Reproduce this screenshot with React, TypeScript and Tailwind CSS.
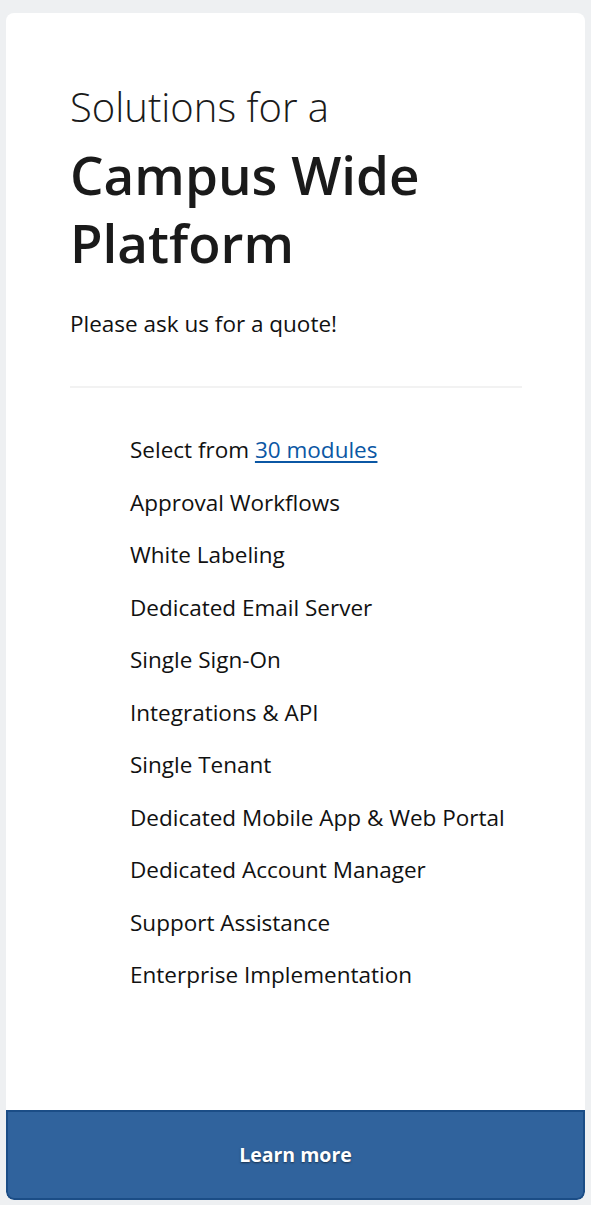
import React from "react";

const features = [
  "Approval Workflows",
  "White Labeling",
  "Dedicated Email Server",
  "Single Sign-On",
  "Integrations & API",
  "Single Tenant",
  "Dedicated Mobile App & Web Portal",
  "Dedicated Account Manager",
  "Support Assistance",
  "Enterprise Implementation",
];

const PlanCard = () => {
  return (
    <div className="flex-1 flex flex-col bg-white rounded-lg overflow-hidden">
      <div className="pl-16 pr-[63px] pt-[72px]">
        <p className="text-[40px] leading-[44px] font-light text-[#1a1a1a]">Solutions for a</p>
        <h2 className="mt-[12px] text-[53px] leading-[68px] font-semibold text-[#1a1a1a]">
          Campus Wide Platform
        </h2>
        <p className="mt-[32px] text-[22.5px] leading-[30px] text-[#111]">Please ask us for a quote!</p>
        <hr className="mt-[47px] border-0 h-[2px] bg-[#f2f2f2]" />
        <ul className="pl-[60px] pt-[46px] text-[22.5px] leading-[32px] text-[#111]">
          <li className="mb-[20.5px]">
            Select from{" "}
            <a href="#" className="text-[#0b57a4] underline underline-offset-[3px]">
              30 modules
            </a>
          </li>
          {features.map((f) => (
            <li key={f} className="mb-[20.5px]">
              {f}
            </li>
          ))}
        </ul>
      </div>
      <button className="mt-auto h-[90px] bg-[#30639d] border-2 border-[#1b4d86] rounded-b-lg text-white text-[19.5px] font-bold [text-shadow:0_1px_2px_rgba(0,0,0,0.5)]">
        Learn more
      </button>
    </div>
  );
};

export default function App() {
  return (
    <div
      className="min-h-screen flex flex-col bg-[#eef0f2] pt-[13px] pb-[5px] px-[6px]"
      style={{ fontFamily: '"Open Sans", sans-serif' }}
    >
      <PlanCard />
    </div>
  );
}
